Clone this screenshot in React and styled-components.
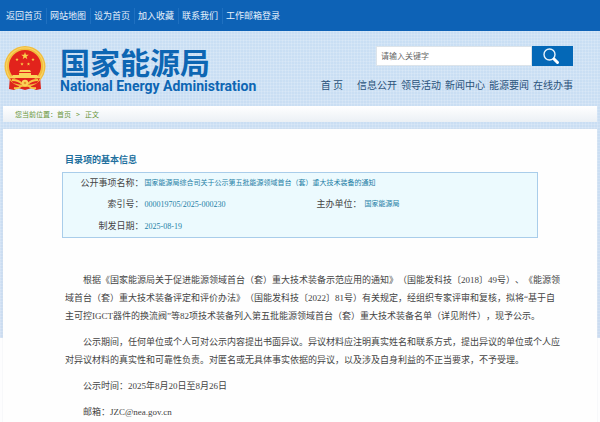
import React from 'react';
import styled, { createGlobalStyle } from 'styled-components';

const CJK = '"Noto Sans CJK SC"';

const GlobalStyle = createGlobalStyle`
  * { box-sizing: border-box; }
  body {
    margin: 0;
    background: #fdfdfe;
    font-family: "Liberation Serif", ${CJK}, sans-serif;
    text-spacing-trim: space-all;
  }
  a { color: inherit; text-decoration: none; }
`;

const Page = styled.div`
  display: flex;
  flex-direction: column;
  min-height: 100vh;
  background-color: #fdfdfe;
  background-image:
    repeating-linear-gradient(90deg, #ffffff28 0 1px, transparent 1px 3px),
    repeating-linear-gradient(0deg, #ffffff28 0 1px, transparent 1px 3px),
    linear-gradient(#c9dff4, #cbdcf1);
  background-size: 100% 338px;
  background-repeat: no-repeat;
`;

const TopBar = styled.nav`
  display: flex;
  align-items: center;
  height: 31px;
  padding-left: 6px;
  background: #0d62b6;
  color: #e6f1fc;
  font-size: 9px;
  line-height: 16px;
`;

const TopLink = styled.a`
  padding-right: 4px;
  margin-right: 3px;
  border-right: 1px solid #1f70c0;
  &:last-child { border: 0; }
`;

const Header = styled.header`
  display: flex;
  justify-content: space-between;
  height: 75px;
  padding: 15px 27px 0 4px;
`;

const Brand = styled.a`
  display: flex;
  gap: 14px;
  color: #0d66b3;
`;

const BrandText = styled.span`
  display: flex;
  flex-direction: column;
  gap: 2px;
  white-space: nowrap;
`;

const BrandName = styled.span`
  font: 700 30px/30px ${CJK}, sans-serif;
`;

const BrandEnglish = styled.span`
  font: 700 14px/16px Roboto, sans-serif;
`;

const Tools = styled.div`
  display: flex;
  flex-direction: column;
  align-items: flex-end;
  gap: 10px;
`;

const Search = styled.form`
  display: flex;
  width: 197px;
  height: 20px;
`;

const SearchInput = styled.input`
  flex: 1;
  min-width: 0;
  padding: 0 4px;
  border: 1px solid #dde4ea;
  background: #fff;
  font: 8px/16px ${CJK}, sans-serif;
  &::placeholder { color: #666; opacity: 1; }
`;

const SearchButton = styled.button`
  display: flex;
  align-items: center;
  justify-content: center;
  width: 41px;
  padding: 0 4px 0 0;
  border: 0;
  background: #0468b7;
`;

const MainNav = styled.nav`
  display: flex;
  gap: 4px;
  color: #29527a;
  font: 10px/18px ${CJK}, sans-serif;
`;

const NavLink = styled.a`
  white-space: nowrap;
  &:first-child { margin-right: 10px; }
`;

const Breadcrumb = styled.nav`
  display: flex;
  gap: 5px;
  height: 16px;
  margin: 0 3px 7px;
  padding-left: 12px;
  background: linear-gradient(#ffffff, #ebf0f5);
  color: #69963a;
  font: 7px/16px ${CJK}, sans-serif;
`;

const Panel = styled.main`
  flex: 1;
  margin: 0 3px;
  padding: 22px 36px 0 59px;
  background: #fefefe;
  box-shadow: 0 0 1px #dde2e8;
`;

const SectionTitle = styled.h1`
  margin: 0 3px 3px;
  color: #206f9d;
  font: 700 9px/18px ${CJK}, sans-serif;
`;

const InfoTable = styled.table`
  width: calc(100% - 23px);
  height: 66px;
  margin-bottom: 33px;
  padding: 0;
  border: 1px solid #a9cdea;
  border-spacing: 0;
  background: #ecfafe;
  table-layout: fixed;
`;

const Column = styled.col`
  width: ${(p) => p.$width};
`;

const LabelCell = styled.th`
  padding: 0;
  color: #444;
  font-size: 9px;
  line-height: 21px;
  font-weight: 400;
  text-align: right;
`;

const ValueCell = styled.td`
  padding: 0 0 0 ${(p) => (p.$wide ? '3px' : '1px')};
  color: #2580a6;
  font-size: ${(p) => (p.$code ? '8px' : '7px')};
  line-height: 21px;
`;

const Article = styled.article`
  padding-left: 3px;
  color: #444;
  font-size: 9px;
  line-height: 18px;
`;

const Paragraph = styled.p`
  margin: 0 0 8px;
  text-indent: 2em;
  &:last-child { margin-bottom: 0; }
`;

const topLinks = ['返回首页', '网站地图', '设为首页', '加入收藏', '联系我们', '工作邮箱登录'];
const navLinks = ['首 页', '信息公开', '领导活动', '新闻中心', '能源要闻', '在线办事'];

const starPoints = (cx, cy, r) =>
  Array.from({ length: 10 }, (_, i) => {
    const radius = i % 2 ? r * 0.4 : r;
    const angle = (Math.PI * i) / 5 - Math.PI / 2;
    return `${cx + radius * Math.cos(angle)},${cy + radius * Math.sin(angle)}`;
  }).join(' ');

const Emblem = () => (
  <svg width="42" height="45" viewBox="0 0 42 45" aria-hidden="true">
    <path d="M6 30 L5 43 L10 44 L14 42 L21 44 L28 42 L32 44 L37 43 L36 30Z" fill="#dd251c" />
    <circle cx="21" cy="20.5" r="20.5" fill="#f2bd3c" />
    <circle cx="21" cy="20.5" r="18.6" fill="none" stroke="#f8d264" strokeWidth="1.2" />
    <circle cx="21" cy="20" r="16" fill="#e2231c" />
    <polygon points={starPoints(21, 10, 4)} fill="#fad14b" />
    <polygon points={starPoints(13, 13.5, 1.8)} fill="#fad14b" />
    <polygon points={starPoints(29, 13.5, 1.8)} fill="#fad14b" />
    <polygon points={starPoints(18, 18, 1.8)} fill="#fad14b" />
    <polygon points={starPoints(24.5, 18, 1.8)} fill="#fad14b" />
    <path d="M16 24 H26 L27 26 H15Z M15 27 H27 V29 H33 L36 32 H6 L9 29 H15Z" fill="#fbd35a" />
    <path d="M6 32 Q21 35 36 32 L33 37 Q21 41 9 37Z" fill="#e2231c" />
    <path d="M8 34 Q15 34 18 38 M34 34 Q27 34 24 38" fill="none" stroke="#f7c543" strokeWidth="2" />
    <circle cx="21" cy="37" r="3.3" fill="#fbd35a" />
    <circle cx="21" cy="37" r="1.3" fill="#e8942b" />
    <path d="M10 42 Q15 43 18 39 M32 42 Q27 43 24 39" fill="none" stroke="#f7c543" strokeWidth="2" />
  </svg>
);

const SearchIcon = () => (
  <svg width="18" height="18" viewBox="0 0 18 18" fill="none" aria-hidden="true">
    <circle cx="7.5" cy="7.5" r="5.5" stroke="#e9f3fb" strokeWidth="1.4" />
    <path d="M12 12 L15.5 15.5" stroke="#fff" strokeWidth="3" strokeLinecap="round" />
  </svg>
);

export default function App() {
  return (
    <>
      <GlobalStyle />
      <Page lang="zh-CN">
        <TopBar>
          {topLinks.map((t) => <TopLink href="#" key={t}>{t}</TopLink>)}
        </TopBar>
        <Header>
          <Brand href="#">
            <Emblem />
            <BrandText>
              <BrandName>国家能源局</BrandName>
              <BrandEnglish>National Energy Administration</BrandEnglish>
            </BrandText>
          </Brand>
          <Tools>
            <Search onSubmit={(e) => e.preventDefault()}>
              <SearchInput type="text" aria-label="请输入关键字" placeholder="请输入关键字" />
              <SearchButton type="submit" aria-label="搜索"><SearchIcon /></SearchButton>
            </Search>
            <MainNav>
              {navLinks.map((t) => <NavLink href="#" key={t}>{t}</NavLink>)}
            </MainNav>
          </Tools>
        </Header>
        <Breadcrumb>
          <span>您当前位置：<a href="#">首页</a></span>
          <span>&gt;</span>
          <span>正文</span>
        </Breadcrumb>
        <Panel>
          <SectionTitle>目录项的基本信息</SectionTitle>
          <InfoTable>
            <colgroup>
              <Column $width="17%" />
              <Column $width="23%" />
              <Column $width="23%" />
              <Column $width="37%" />
            </colgroup>
            <tbody>
              <tr>
                <LabelCell scope="row">公开事项名称：</LabelCell>
                <ValueCell colSpan={3}>国家能源局综合司关于公示第五批能源领域首台（套）重大技术装备的通知</ValueCell>
              </tr>
              <tr>
                <LabelCell scope="row">索引号：</LabelCell>
                <ValueCell $code>000019705/2025-000230</ValueCell>
                <LabelCell scope="row">主办单位：</LabelCell>
                <ValueCell $wide>国家能源局</ValueCell>
              </tr>
              <tr>
                <LabelCell scope="row">制发日期：</LabelCell>
                <ValueCell $code colSpan={3}>2025-08-19</ValueCell>
              </tr>
            </tbody>
          </InfoTable>
          <Article>
            <Paragraph>
              根据《国家能源局关于促进能源领域首台（套）重大技术装备示范应用的通知》（国能发科技〔2018〕49号）、《能源领域首台（套）重大技术装备评定和评价办法》（国能发科技〔2022〕81号）有关规定，经组织专家评审和复核，拟将“基于自主可控IGCT器件的换流阀”等82项技术装备列入第五批能源领域首台（套）重大技术装备名单（详见附件），现予公示。
            </Paragraph>
            <Paragraph>
              公示期间，任何单位或个人可对公示内容提出书面异议。异议材料应注明真实姓名和联系方式，提出异议的单位或个人应对异议材料的真实性和可靠性负责。对匿名或无具体事实依据的异议，以及涉及自身利益的不正当要求，不予受理。
            </Paragraph>
            <Paragraph>公示时间：2025年8月20日至8月26日</Paragraph>
            <Paragraph>邮箱：JZC@nea.gov.cn</Paragraph>
          </Article>
        </Panel>
      </Page>
    </>
  );
}
